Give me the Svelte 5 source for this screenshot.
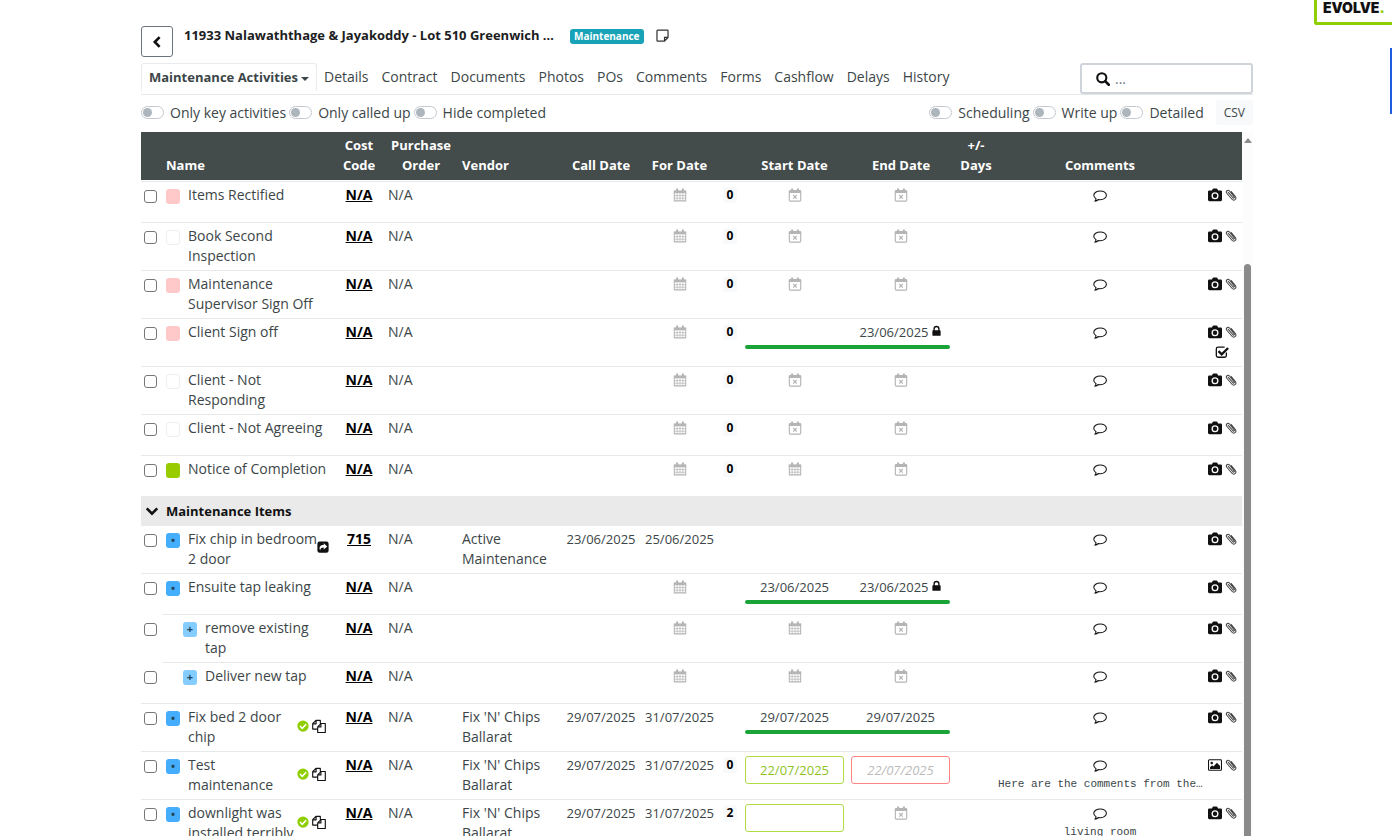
<script lang="ts">
  interface Activity {
    name: string;
    swatch: "pink" | "none" | "green" | "blue" | "sky";
    code?: string;
    vendor?: string;
    call?: string;
    due?: string;
    days?: number;
    start?: string;
    end?: string;
    bar?: boolean;
    locked?: boolean;
    child?: boolean;
    flags?: string[];
    comment?: string;
    media?: string;
    ticked?: boolean;
  }

  const tabs = ["Details", "Contract", "Documents", "Photos", "POs", "Comments", "Forms", "Cashflow", "Delays", "History"];
  const leftToggles = ["Only key activities", "Only called up", "Hide completed"];
  const rightToggles = ["Scheduling", "Write up", "Detailed"];

  const activities: Activity[] = [
    { name: "Items Rectified", swatch: "pink", days: 0, start: "times", end: "times" },
    { name: "Book Second\nInspection", swatch: "none", days: 0, start: "times", end: "times" },
    { name: "Maintenance\nSupervisor Sign Off", swatch: "pink", days: 0, start: "times", end: "times" },
    { name: "Client Sign off", swatch: "pink", days: 0, end: "23/06/2025", locked: true, bar: true, ticked: true },
    { name: "Client - Not\nResponding", swatch: "none", days: 0, start: "times", end: "times" },
    { name: "Client - Not Agreeing", swatch: "none", days: 0, start: "times", end: "times" },
    { name: "Notice of Completion", swatch: "green", days: 0, start: "calendar", end: "times" },
  ];

  const items: Activity[] = [
    { name: "Fix chip in bedroom\n2 door", swatch: "blue", code: "715", vendor: "Active\nMaintenance", call: "23/06/2025", due: "25/06/2025", flags: ["share"] },
    { name: "Ensuite tap leaking", swatch: "blue", start: "23/06/2025", end: "23/06/2025", locked: true, bar: true },
    { name: "remove existing\ntap", swatch: "sky", child: true, start: "calendar", end: "times" },
    { name: "Deliver new tap", swatch: "sky", child: true, start: "calendar", end: "times" },
    { name: "Fix bed 2 door\nchip", swatch: "blue", vendor: "Fix 'N' Chips\nBallarat", call: "29/07/2025", due: "31/07/2025", start: "29/07/2025", end: "29/07/2025", bar: true, flags: ["done", "copy"] },
    { name: "Test\nmaintenance", swatch: "blue", vendor: "Fix 'N' Chips\nBallarat", call: "29/07/2025", due: "31/07/2025", days: 0, start: "input:22/07/2025", end: "input:22/07/2025", flags: ["done", "copy"], comment: "Here are the comments from the…", media: "image" },
    { name: "downlight was\ninstalled terribly", swatch: "blue", vendor: "Fix 'N' Chips\nBallarat", call: "29/07/2025", due: "31/07/2025", days: 2, start: "input:", end: "times", flags: ["done", "copy"], comment: "living room" },
  ];

  let open = $state(true);
</script>

{#snippet icon(name: string)}
  <svg class="icon {name}" viewBox="0 0 16 16" aria-hidden="true">
    {#if name === "left"}
      <path d="M11 2.5 5.5 8l5.500 5.500" fill="none" stroke="currentColor" stroke-width="3" />
    {:else if name === "down"}
      <path d="M2 5l6 6 6-6" fill="none" stroke="currentColor" stroke-width="3" />
    {:else if name === "search"}
      <circle cx="6.600" cy="6.600" r="5.200" fill="none" stroke="currentColor" stroke-width="2.400" />
      <path d="M10.500 10.500 14.600 14.600" stroke="currentColor" stroke-width="3" stroke-linecap="round" />
    {:else if name === "note"}
      <path d="M2 1.500h12a.8.8 0 0 1 .8.8V10.500L10.500 14.800H2a.8.8 0 0 1-.8-.8V2.300a.8.8 0 0 1 .8-.8zM14.500 10.300h-4v4.200" fill="none" stroke="currentColor" stroke-width="1.500" />
    {:else if name === "calendar"}
      <path d="M1.500 3.500h13V14.700h-13z" fill="none" stroke="currentColor" stroke-width="1.200" />
      <path d="M1 3h14v3H1zM3.500.5h2.400V4H3.500zM10.100.5h2.400V4h-2.400z" fill="currentColor" />
      <path d="M4.700 6v8.500M8 6v8.500M11.300 6v8.500M1.500 8.700h13M1.500 11.700h13" stroke="currentColor" stroke-width=".8" />
    {:else if name === "times"}
      <rect x="1.500" y="3" width="13" height="12" rx="1" fill="none" stroke="currentColor" stroke-width="1.300" />
      <path d="M1 3h14v2.600H1zM3.500.5h2.400V4H3.500zM10.100.5h2.400V4h-2.400z" fill="currentColor" />
      <path d="M6 8l4 4.200M10 8l-4 4.200" stroke="currentColor" stroke-width="1.300" />
    {:else if name === "comment"}
      <path d="M8.300 2.200c3.900 0 7 2.200 7 5s-3.100 5-7 5c-.7 0-1.400-.1-2-.2-1 .9-2.600 1.800-4.200 2 .7-.8 1.300-1.800 1.400-2.900C1.900 10.200.9 8.800.9 7.200c0-2.800 3.300-5 7.400-5z" fill="none" stroke="currentColor" stroke-width="1.200" stroke-linejoin="round" />
    {:else if name === "camera"}
      <path fill-rule="evenodd" d="M1.500 2.800h3l.8-1.700Q5.600.6 6.200.6h3.600q.6 0 .9.5l.8 1.700h3q1.500 0 1.500 1.500v9.200q0 1.500-1.500 1.500h-13Q0 15 0 13.500V4.300q0-1.500 1.500-1.500zM8 4.800a4 4 0 1 0 0 8 4 4 0 0 0 0-8zm0 1.500a2.500 2.500 0 1 1 0 5 2.500 2.500 0 0 1 0-5z" fill="currentColor" />
    {:else if name === "image"}
      <rect x=".6" y="2.100" width="14.800" height="12" rx="1" fill="none" stroke="currentColor" stroke-width="1.200" />
      <circle cx="4.300" cy="5.600" r="1.400" fill="currentColor" />
      <path d="M2.300 12.600v-2l2.400-2.400 1.500 1.500 4-4.300 3.600 3.600v3.600z" fill="currentColor" />
    {:else if name === "clip"}
      <path d="M4.400 4.400l6.200 7.300c1 1.100 2.500-.1 1.600-1.300L6.100 2.700C4 .3.400 3.100 2.400 5.700l6.900 8c2.700 3 6.900-.4 4.500-3.700L8.400 3.400" fill="none" stroke="currentColor" stroke-width="1.400" stroke-linecap="round" />
    {:else if name === "ticked"}
      <path d="M13 8.500V12q0 2-2 2H3.500q-2 0-2-2V4.500q0-2 2-2H11" fill="none" stroke="currentColor" stroke-width="1.500" />
      <path d="M4 7l3.700 3.700L15 3.400" fill="none" stroke="currentColor" stroke-width="2.600" />
    {:else if name === "lock"}
      <path d="M4.500 8V5a3.500 3.500 0 0 1 7 0v3" fill="none" stroke="currentColor" stroke-width="2" />
      <rect x="2" y="7" width="12" height="8" rx="1" fill="currentColor" />
    {:else if name === "share"}
      <rect x=".5" y=".5" width="15" height="15" rx="3" fill="currentColor" />
      <path d="M4.400 12.500c-2.600-4.500.2-7.200 4.600-7.200V3l4.600 4.200L9 11.400V8.600c-3 0-4.800 1-4.600 3.900z" fill="#fff" />
    {:else if name === "done"}
      <circle cx="8" cy="8" r="7.500" fill="currentColor" />
      <path d="M4 8l3 3 5.200-5.300" fill="none" stroke="#fff" stroke-width="2.200" />
    {:else if name === "copy"}
      <path d="M6.300 11.500H.8V5.300L4.500 1.500h5v3.700M4.700 1.700v3.800H.9M10.200 5.200h5v10.200H6.500V9zM10.200 5.200V9H6.500" fill="none" stroke="currentColor" stroke-width="1.300" stroke-linejoin="round" />
    {/if}
  </svg>
{/snippet}

{#snippet toggle(label: string)}
  <label class="toggle"><input type="checkbox" role="switch" />{label}</label>
{/snippet}

{#snippet slot(value: string | undefined, kind: string, locked: boolean)}
  <div class="slot">
    {#if value?.startsWith("input:")}
      <input class="date-input {kind}" type="text" aria-label="{kind} date" value={value.slice(6)} />
    {:else if value === "calendar" || value === "times"}
      <span class="muted">{@render icon(value)}</span>
    {:else if value}
      <span class="date">{value}</span>
      {#if locked}{@render icon("lock")}{/if}
    {/if}
  </div>
{/snippet}

{#snippet row(item: Activity)}
  <tr class:child={item.child}>
    <td><input class="pick" type="checkbox" aria-label="Select {item.name}" /></td>
    <td>
      <div class="name">
        <span class="swatch {item.swatch}">
          {#if item.swatch === "blue"}•{:else if item.swatch === "sky"}+{/if}
        </span>
        <span class="label">{item.name}</span>
        {#if item.flags}
          <span class="flags">
            {#each item.flags as flag}{@render icon(flag)}{/each}
          </span>
        {/if}
      </div>
    </td>
    <td class="center"><a class="code" href="#code">{item.code ?? "N/A"}</a></td>
    <td class="po">N/A</td>
    <td class="vendor">{item.vendor ?? ""}</td>
    <td class="center date">{item.call ?? ""}</td>
    <td class="center date">
      {#if item.due}
        {item.due}
      {:else}
        <span class="muted">{@render icon("calendar")}</span>
      {/if}
    </td>
    <td class="center">
      {#if item.days !== undefined}<span class="days">{item.days}</span>{/if}
    </td>
    <td colspan="2">
      <div class="span">
        {@render slot(item.start, "start", false)}
        {@render slot(item.end, "end", item.locked ?? false)}
        {#if item.bar}<div class="bar"></div>{/if}
      </div>
    </td>
    <td></td>
    <td class="comments">
      {@render icon("comment")}
      {#if item.comment}<p>{item.comment}</p>{/if}
    </td>
    <td class="actions">
      <div>{@render icon(item.media ?? "camera")}{@render icon("clip")}</div>
      {#if item.ticked}<div>{@render icon("ticked")}</div>{/if}
    </td>
  </tr>
{/snippet}

<div class="brand">EVOLVE<span>.</span></div>
<div class="edge"></div>

<main>
  <header>
    <button class="back" aria-label="Back">{@render icon("left")}</button>
    <h1>11933 Nalawaththage &amp; Jayakoddy - Lot 510 Greenwich …</h1>
    <span class="badge">Maintenance</span>
    {@render icon("note")}
  </header>

  <nav>
    <a class="tab active" href="#activities">Maintenance Activities<i class="caret"></i></a>
    {#each tabs as tab}
      <a class="tab" href="#{tab.toLowerCase()}">{tab}</a>
    {/each}
    <label class="search-box">
      {@render icon("search")}
      <input type="text" placeholder="..." aria-label="Search" />
    </label>
  </nav>

  <div class="filters">
    {#each leftToggles as label}{@render toggle(label)}{/each}
    <span class="spacer"></span>
    {#each rightToggles as label}{@render toggle(label)}{/each}
    <button class="csv">CSV</button>
  </div>

  <div class="pane">
    <div class="scroll">
      <table>
        <colgroup>
          <col class="w-check" />
          <col class="w-name" />
          <col class="w-code" />
          <col class="w-po" />
          <col class="w-vendor" />
          <col class="w-call" />
          <col class="w-for" />
          <col class="w-num" />
          <col class="w-start" />
          <col class="w-end" />
          <col class="w-days" />
          <col />
          <col class="w-actions" />
        </colgroup>
        <thead>
          <tr>
            <th></th>
            <th class="left first">Name</th>
            <th>Cost Code</th>
            <th class="po">Purchase Order</th>
            <th class="left vendor">Vendor</th>
            <th>Call Date</th>
            <th>For Date</th>
            <th></th>
            <th>Start Date</th>
            <th>End Date</th>
            <th>+/-<br />Days</th>
            <th>Comments</th>
            <th></th>
          </tr>
        </thead>
        <tbody>
          {#each activities as item}{@render row(item)}{/each}
          <tr class="section">
            <td colspan="13">
              <button onclick={() => (open = !open)} aria-expanded={open}>
                {@render icon("down")}Maintenance Items
              </button>
            </td>
          </tr>
          {#if open}
            {#each items as item}{@render row(item)}{/each}
          {/if}
        </tbody>
      </table>
    </div>
    <div class="track"><i class="up"></i><div class="thumb"></div></div>
  </div>
</main>

<style>
  :global(body) {
    background: #fff;
    color: #3c4648;
    font: 14px/20px "Century Gothic", "Open Sans", sans-serif;
  }

  button,
  input {
    font: inherit;
    color: inherit;
  }

  a {
    color: inherit;
    text-decoration: none;
  }

  main {
    display: flex;
    flex-direction: column;
    box-sizing: border-box;
    height: 100vh;
    margin: 0 139px 0 141px;
    padding-top: 26px;
    overflow: hidden;
  }

  .icon {
    width: 14px;
    height: 14px;
    flex: none;
    color: #111;
  }

  .brand {
    position: absolute;
    top: 0;
    right: 0;
    box-sizing: border-box;
    width: 78px;
    height: 25px;
    padding-left: 6px;
    border: solid #8fce00;
    border-width: 0 0 3px 3px;
    border-radius: 0 0 0 3px;
    color: #111;
    font: 900 14px/16px Inter, sans-serif;
    white-space: nowrap;
  }

  .brand span {
    color: #8fce00;
  }

  .edge {
    position: absolute;
    top: 48px;
    right: 0;
    width: 2px;
    height: 66px;
    background: #1f5be0;
  }

  header {
    display: flex;
    align-items: flex-start;
    height: 37px;
  }

  .back {
    display: grid;
    place-items: center;
    width: 32px;
    height: 31px;
    padding: 0;
    border: 1px solid #6c757d;
    border-radius: 3px;
    background: #fff;
  }

  h1 {
    margin: 0 16px 0 11px;
    color: #1c2022;
    font-size: 13px;
    font-weight: 700;
    line-height: 18px;
  }

  .badge {
    margin: 3px 12px 0 0;
    padding: 0 4px;
    border-radius: 3px;
    background: #17a2b8;
    color: #fff;
    font-size: 10px;
    font-weight: 700;
    line-height: 15px;
  }

  header .note {
    width: 13px;
    height: 13px;
    margin-top: 3px;
    color: #333;
  }

  nav {
    display: flex;
    height: 31px;
    border-bottom: 1px solid #e3e7ea;
  }

  .tab {
    margin-right: 13px;
    line-height: 28px;
    white-space: nowrap;
  }

  .tab.active {
    height: 27px;
    margin-right: 7px;
    padding: 0 7px;
    border: 1px solid #e9ecef;
    border-bottom: 0;
    border-radius: 3px 3px 0 0;
    font-size: 13px;
    font-weight: 700;
    line-height: 26px;
  }

  .caret {
    display: inline-block;
    margin-left: 3px;
    border: 4px solid transparent;
    border-top-color: currentColor;
    border-bottom: 0;
    vertical-align: middle;
  }

  .search-box {
    display: flex;
    align-items: center;
    box-sizing: border-box;
    width: 173px;
    height: 31px;
    margin-left: auto;
    padding-left: 14px;
    border: 2px solid #ced4da;
    border-radius: 3px;
  }

  .search-box input {
    flex: 1;
    min-width: 0;
    margin-left: 5px;
    padding: 0;
    border: 0;
    outline: 0;
    background: none;
  }

  .search-box input::placeholder {
    color: #6c757d;
  }

  .filters {
    display: flex;
    align-items: center;
    height: 35px;
    padding-bottom: 2px;
  }

  .toggle {
    display: flex;
    align-items: center;
    margin-right: 3px;
    white-space: nowrap;
  }

  .toggle input {
    appearance: none;
    box-sizing: border-box;
    width: 23px;
    height: 13px;
    margin: 0 6px 0 0;
    padding: 1px;
    border: 1px solid #c3c9cf;
    border-radius: 7px;
    background: #fff;
  }

  .toggle input::before {
    content: "";
    display: block;
    width: 9px;
    height: 9px;
    border-radius: 50%;
    background: #adb5bd;
  }

  .toggle input:checked::before {
    margin-left: auto;
  }

  .spacer {
    flex: 1;
  }

  .csv {
    height: 25px;
    margin-left: 9px;
    padding: 0 8px;
    border: 0;
    border-radius: 3px;
    background: #f8f9fa;
    font-size: 12px;
  }

  .pane {
    display: flex;
    flex: 1;
    min-height: 0;
  }

  .scroll {
    flex: 1;
    min-width: 0;
    overflow: hidden;
  }

  .track {
    width: 11px;
    display: flex;
    flex-direction: column;
    align-items: center;
    background: #fcfcfc;
  }

  .up {
    margin-top: 6px;
    border: 4px solid transparent;
    border-top: 0;
    border-bottom: 5px solid #8a8a8a;
  }

  .thumb {
    flex: 1;
    width: 7px;
    margin-top: 121px;
    border-radius: 4px 4px 0 0;
    background: #8a8a8a;
  }

  table {
    width: 100%;
    table-layout: fixed;
    border-collapse: separate;
    border-spacing: 0;
  }

  .w-check { width: 21px; }
  .w-name { width: 176px; }
  .w-code { width: 42px; }
  .w-po { width: 74px; }
  .w-vendor { width: 108px; }
  .w-call { width: 78px; }
  .w-for { width: 79px; }
  .w-num { width: 22px; }
  .w-start { width: 107px; }
  .w-end { width: 106px; }
  .w-days { width: 44px; }
  .w-actions { width: 40px; }

  th {
    height: 48px;
    box-sizing: border-box;
    padding: 3px 0 5px;
    border-bottom: 1px solid #fff;
    background: #434b4b;
    background-clip: padding-box;
    color: #fff;
    font-size: 13px;
    font-weight: 700;
    vertical-align: bottom;
  }

  th.left {
    text-align: left;
  }

  th.first {
    padding-left: 4px;
  }

  td {
    box-sizing: border-box;
    height: 41px;
    padding: 3px 0 4px;
    border-top: 1px solid #e6eaec;
    vertical-align: top;
  }

  .child td:first-child {
    border-top-color: transparent;
  }

  .pick {
    display: block;
    appearance: none;
    box-sizing: border-box;
    width: 13px;
    height: 13px;
    margin: 5px 0 0 3px;
    border: 1px solid #767676;
    border-radius: 3px;
    background: #fff;
  }

  .pick:checked {
    background: #45aefc;
  }

  .name {
    display: flex;
    padding-left: 4px;
  }

  .child .name {
    padding-left: 21px;
  }

  .swatch {
    flex: none;
    box-sizing: border-box;
    width: 14px;
    height: 15px;
    margin: 4px 8px 0 0;
    border-radius: 3px;
    color: #24465c;
    font-size: 11px;
    font-weight: 700;
    line-height: 14px;
    text-align: center;
  }

  .swatch.none { border: 1px solid #eee; }
  .swatch.pink { background: #ffc9c9; }
  .swatch.green { background: #99cc00; }
  .swatch.blue { background: #45aefc; }
  .swatch.sky { background: #85ccff; }

  .label {
    flex: 1;
    white-space: pre;
  }

  .flags {
    display: flex;
    gap: 3px;
    margin: 12px 12px 0 0;
  }

  .icon.done {
    width: 12px;
    color: #8fce00;
  }

  .icon.share {
    width: 12px;
    height: 12px;
  }

  .center {
    text-align: center;
  }

  .code {
    color: #000;
    font-weight: 700;
    text-decoration: underline;
  }

  .po {
    padding-left: 8px;
  }

  .vendor {
    padding-left: 8px;
    white-space: pre;
  }

  .date {
    font-size: 13px;
  }

  .muted {
    display: flex;
    align-items: center;
    justify-content: center;
    height: 20px;
  }

  .muted .icon {
    color: #b5b5b5;
  }

  .days {
    display: block;
    width: 14px;
    margin: 2px auto 0;
    border-radius: 3px;
    background: #f8f9fa;
    color: #000;
    font-size: 12px;
    font-weight: 700;
    line-height: 16px;
  }

  .span {
    display: grid;
    grid-template-columns: 1fr 1fr;
    column-gap: 7px;
    padding: 0 4px;
  }

  .slot {
    display: flex;
    align-items: flex-start;
    justify-content: center;
    min-height: 20px;
  }

  .icon.lock {
    width: 11px;
    height: 12px;
    margin: 3px 0 0 2px;
  }

  .bar {
    grid-column: 1 / 3;
    height: 4px;
    margin-top: 3px;
    border-radius: 2px;
    background: #1aa337;
  }

  .date-input {
    box-sizing: border-box;
    width: 100%;
    height: 28px;
    margin-top: 1px;
    padding: 0;
    border: 1px solid #b1dc46;
    border-radius: 3px;
    color: #8fc31f;
    font-size: 13px;
    text-align: center;
    outline: 0;
  }

  .date-input.end {
    border-color: #ff8585;
    color: #bbb;
    font-style: italic;
  }

  .comments {
    text-align: center;
  }

  .comments .icon {
    display: block;
    margin: 4px auto 0;
  }

  .comments p {
    margin: 4px 0 0;
    font: 11px/14px "Liberation Mono", monospace;
    white-space: nowrap;
  }

  .actions div {
    display: flex;
    align-items: center;
    justify-content: center;
    gap: 3px;
    height: 20px;
  }

  .icon.clip {
    width: 12px;
    height: 12px;
    color: #444;
  }

  .section td {
    height: 29px;
    padding: 0;
    border: 0;
    background: #eaeaea;
    vertical-align: middle;
  }

  .section button {
    display: flex;
    align-items: center;
    gap: 7px;
    padding: 0 4px;
    border: 0;
    background: none;
    color: #111;
    font-size: 13px;
    font-weight: 700;
  }
</style>
